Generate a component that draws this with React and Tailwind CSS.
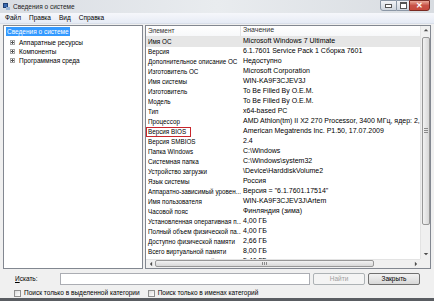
import React from "react";

const rows = [
  ["Имя ОС", "Microsoft Windows 7 Ultimate"],
  ["Версия", "6.1.7601 Service Pack 1 Сборка 7601"],
  ["Дополнительное описание ОС", "Недоступно"],
  ["Изготовитель ОС", "Microsoft Corporation"],
  ["Имя системы", "WIN-KA9F3CJEV3J"],
  ["Изготовитель", "To Be Filled By O.E.M."],
  ["Модель", "To Be Filled By O.E.M."],
  ["Тип", "x64-based PC"],
  ["Процессор", "AMD Athlon(tm) II X2 270 Processor, 3400 МГц, ядер: 2, логических процессоров: 2"],
  ["Версия BIOS", "American Megatrends Inc. P1.50, 17.07.2009"],
  ["Версия SMBIOS", "2.4"],
  ["Папка Windows", "C:\\Windows"],
  ["Системная папка", "C:\\Windows\\system32"],
  ["Устройство загрузки", "\\Device\\HarddiskVolume2"],
  ["Язык системы", "Россия"],
  ["Аппаратно-зависимый уровен...", "Версия = \"6.1.7601.17514\""],
  ["Имя пользователя", "WIN-KA9F3CJEV3J\\Artem"],
  ["Часовой пояс", "Финляндия (зима)"],
  ["Установленная оперативная п...", "4,00 ГБ"],
  ["Полный объем физической па...", "4,00 ГБ"],
  ["Доступно физической памяти", "2,66 ГБ"],
  ["Всего виртуальной памяти", "8,00 ГБ"],
  ["Доступно виртуальной памяти", "5,40 ГБ"],
];

function Arrow({ dir }) {
  const pts = {
    up: "1,4 4,1 7,4",
    down: "1,1 4,4 7,1",
    left: "4,1 1,4 4,7",
    right: "1,1 4,4 1,7",
  }[dir];
  const vb = dir === "up" || dir === "down" ? "0 0 8 5" : "0 0 5 8";
  const cls = dir === "up" || dir === "down" ? "w-[6px] h-[4px]" : "w-[4px] h-[6px]";
  return (
    <svg viewBox={vb} className={cls}>
      <polygon points={pts} fill="#4d4d4d" />
    </svg>
  );
}

function Plus() {
  return (
    <div className="w-[5px] h-[5px] border border-[#a5a5a5] bg-white flex items-center justify-center relative shrink-0">
      <div className="absolute w-[3px] h-px bg-[#555]" />
      <div className="absolute h-[3px] w-px bg-[#555]" />
    </div>
  );
}

function CheckBox() {
  return <div className="w-[7px] h-[7px] border border-[#8f8f8f] bg-gradient-to-br from-[#dcdcdc] to-white shrink-0" />;
}

export default function App() {
  return (
    <div
      className="w-[434px] h-[301px] overflow-hidden flex flex-col bg-[#f0f0f0] text-black"
      style={{ fontFamily: '"Liberation Sans", Arial, sans-serif' }}
    >
      {/* title bar */}
      <div className="h-[13px] flex items-start bg-gradient-to-r from-[#d9dde3] via-[#e9ecef] to-[#d8dce1] relative">
        <div className="mt-[3px] ml-[3px] w-[7px] h-[7px] relative shrink-0">
          <div className="absolute left-0 top-0 w-[5px] h-[5px] bg-[#3a6ab0] border border-[#1e3f74]" />
          <div className="absolute right-0 bottom-0 w-[4px] h-[3px] bg-[#9ab6d8]" />
        </div>
        <div className="ml-[3px] mt-[2px] text-[6.5px] leading-[9px] text-[#222]">Сведения о системе</div>
        <div className="ml-auto mr-[4px] flex h-[12px]">
          <div className="w-[17px] h-[11px] border border-[#8b97a6] rounded-bl-[3px] bg-gradient-to-b from-[#f1f3f6] to-[#cfd6df] flex items-end justify-center pb-[2px]">
            <div className="w-[5px] h-[2px] bg-white border border-[#555] box-content" />
          </div>
          <div className="w-[12px] h-[11px] border-y border-[#8b97a6] bg-gradient-to-b from-[#f1f3f6] to-[#cfd6df] flex items-center justify-center">
            <div className="w-[5px] h-[4px] border border-[#555] border-t-2 bg-white box-content" />
          </div>
          <div className="w-[21px] h-[11px] border border-[#7a2a22] rounded-br-[3px] bg-gradient-to-b from-[#e9a99a] via-[#c75248] to-[#c84a3c] flex items-center justify-center">
            <span className="text-white text-[8px] font-bold leading-none">✕</span>
          </div>
        </div>
      </div>

      {/* menu bar */}
      <div className="h-[11px] flex items-center gap-[8px] px-[5px] text-[6.5px] bg-gradient-to-b from-[#f6f7fb] to-[#e6ebf5] border-b border-[#d9dfe9]">
        <span>Файл</span>
        <span>Правка</span>
        <span>Вид</span>
        <span>Справка</span>
      </div>

      {/* main */}
      <div className="flex h-[244px] mt-[1px] px-[3px] gap-[2px]">
        {/* tree */}
        <div className="w-[140px] border border-[#828790] bg-white pt-[1px] pl-[2px] text-[6.5px]">
          <div className="inline-block bg-[#3399ff] text-white px-[1px] h-[9px] leading-[9px]">Сведения о системе</div>
          <div className="mt-[2px] flex flex-col">
            {["Аппаратные ресурсы", "Компоненты", "Программная среда"].map((t) => (
              <div key={t} className="flex items-center h-[9px] pl-[4px] gap-[4px]">
                <Plus />
                <span className="leading-[9px]">{t}</span>
              </div>
            ))}
          </div>
        </div>

        {/* list */}
        <div className="flex-1 border border-[#828790] bg-white flex flex-col min-w-0">
          <div className="flex flex-1 min-h-0">
            <div className="flex-1 min-w-0 overflow-hidden text-[7px]">
              <div className="h-[11px] flex items-center border-b border-[#e5e5e5] bg-gradient-to-b from-white to-[#f7f8fa] text-[#333]">
                <div className="w-[95px] pl-[2px] h-full flex items-center border-r border-[#e5e5e5] text-[6.5px]">Элемент</div>
                <div className="pl-[2px]">Значение</div>
              </div>
              {rows.map(([a, b], i) => (
                <div
                  key={i}
                  className={
                    "relative h-[10px] flex items-center whitespace-nowrap " +
                    (i === 0 ? "bg-[#e6e6e6]" : "")
                  }
                >
                  <div className="w-[95px] pl-[2px] shrink-0 overflow-hidden text-[6.3px]">{a}</div>
                  <div className="pl-[2px]">{b}</div>
                  {i === 9 && (
                    <span className="absolute left-0 top-0 w-[45px] h-[10px] border border-[#c8262c]" />
                  )}
                </div>
              ))}
            </div>
            {/* vertical scrollbar */}
            <div className="w-[10px] bg-[#f0f0f0] border-l border-[#e3e3e3] flex flex-col items-center">
              <div className="h-[9px] w-full flex items-center justify-center"><Arrow dir="up" /></div>
              <div className="mt-[2px] h-[188px] w-[8px] rounded-[2px] border border-[#979797] bg-gradient-to-r from-[#f2f2f2] to-[#d8d8d8] flex flex-col items-center justify-center gap-[1px]">
                <div className="w-[4px] h-px bg-[#8a8a8a]" />
                <div className="w-[4px] h-px bg-[#8a8a8a]" />
                <div className="w-[4px] h-px bg-[#8a8a8a]" />
              </div>
              <div className="mt-auto h-[9px] w-full flex items-center justify-center"><Arrow dir="down" /></div>
            </div>
          </div>
          {/* horizontal scrollbar */}
          <div className="h-[9px] flex">
            <div className="flex-1 bg-[#f0f0f0] border-t border-[#e3e3e3] flex items-center">
              <div className="w-[9px] h-full flex items-center justify-center"><Arrow dir="left" /></div>
              <div className="w-[219px] h-[7px] rounded-[2px] border border-[#979797] bg-gradient-to-b from-[#f2f2f2] to-[#d8d8d8] flex items-center justify-center gap-[1px]">
                <div className="h-[3px] w-px bg-[#8a8a8a]" />
                <div className="h-[3px] w-px bg-[#8a8a8a]" />
                <div className="h-[3px] w-px bg-[#8a8a8a]" />
              </div>
              <div className="ml-auto w-[9px] h-full flex items-center justify-center"><Arrow dir="right" /></div>
            </div>
            <div className="w-[10px] bg-[#f0f0f0]" />
          </div>
        </div>
      </div>

      {/* search row */}
      <div className="h-[15px] mt-[3px] flex items-center text-[6.5px]">
        <span className="ml-[15px] w-[45px]"><span className="underline">И</span>скать:</span>
        <div className="w-[250px] h-[12px] bg-white border border-[#abadb3]" />
        <div className="ml-[3px] w-[52px] h-[12px] border border-[#adb2b5] rounded-[2px] bg-[#f4f4f4] text-[#a0a0a0] flex items-center justify-center">Найти</div>
        <div className="ml-[3px] w-[52px] h-[12px] border border-[#707070] rounded-[2px] bg-gradient-to-b from-[#f2f2f2] to-[#d8d8d8] flex items-center justify-center">Закрыть</div>
      </div>

      {/* checkboxes */}
      <div className="h-[10px] mt-[2px] flex items-center text-[6.5px]">
        <div className="ml-[14px] flex items-center gap-[3px]">
          <CheckBox />
          <span>Поиск только в выделенной категории</span>
        </div>
        <div className="ml-[8px] flex items-center gap-[3px]">
          <CheckBox />
          <span>Поиск только в именах категорий</span>
        </div>
      </div>

      <div className="mt-auto h-[3px] bg-[#5a5d62]" />
    </div>
  );
}
